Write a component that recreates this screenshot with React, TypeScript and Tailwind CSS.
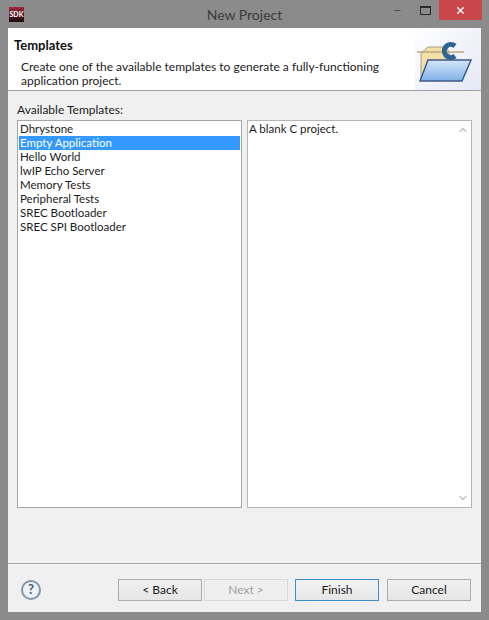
import React from "react";
import { ChevronDown, ChevronUp, Minus, X } from "lucide-react";

const templates = [
  "Dhrystone",
  "Empty Application",
  "Hello World",
  "lwIP Echo Server",
  "Memory Tests",
  "Peripheral Tests",
  "SREC Bootloader",
  "SREC SPI Bootloader",
];

const FolderIcon = () => (
  <svg width="60" height="46" viewBox="0 0 60 46">
    <defs>
      <linearGradient id="folderFront" x1="0" y1="0" x2="0" y2="1">
        <stop offset="0" stopColor="#d6e6f8" />
        <stop offset="1" stopColor="#7fb0e8" />
      </linearGradient>
    </defs>
    <path d="M4 44 L4 17 L11 11 L30 11 L34 24 L34 40 Z" fill="#f3dfa8" stroke="#a8a08a" strokeWidth="1" />
    <path d="M0 16 L47 16" stroke="#b9a77f" strokeWidth="1.5" />
    <path d="M38 10 A6.5 6.5 0 1 0 38 20" fill="none" stroke="#2f6393" strokeWidth="5" />
    <path d="M3 45 L11 24 L54 24 L45 45 Z" fill="url(#folderFront)" stroke="#3f5a86" strokeWidth="1.5" />
  </svg>
);

const WizardButton = ({
  label,
  disabled,
  primary,
}: {
  label: string;
  disabled?: boolean;
  primary?: boolean;
}) => (
  <button
    type="button"
    className={`h-[22px] w-[84px] border bg-gradient-to-b text-[12px] leading-none ${
      disabled
        ? "border-[#d9d9d9] from-[#efefef] to-[#efefef] text-[#a0a0a0]"
        : primary
        ? "border-[#3c8fc8] from-[#f2f2f2] to-[#e6e6e6] text-[#1a1a1a]"
        : "border-[#acacac] from-[#f0f0f0] to-[#e5e5e5] text-[#1a1a1a]"
    }`}
  >
    {label}
  </button>
);

export default function App() {
  return (
    <div className="flex h-[620px] w-[489px] flex-col bg-[#8b8b8b] px-2 pb-2 font-['Lato',sans-serif] text-[11.5px] text-[#1c1c1c]">
      <div className="relative flex h-[28px] shrink-0 items-center justify-center">
        <div className="absolute left-[1px] top-[7px] flex h-[15px] w-[15px] items-center justify-center bg-gradient-to-b from-[#a02838] to-[#1c0a10] text-[7px] font-bold leading-none text-white">
          SDK
        </div>
        <span className="text-[14px] text-[#3c3c3c]">New Project</span>
        <div className="absolute -right-[1px] top-0 flex items-start">
          <div className="flex h-[20px] w-[29px] items-center justify-center text-[#3a3a3a]">
            <Minus size={9} strokeWidth={2} />
          </div>
          <div className="flex h-[20px] w-[27px] items-center justify-center">
            <div className="h-[9px] w-[11px] border border-t-2 border-[#2b2b2b]" />
          </div>
          <div className="flex h-[20px] w-[43px] items-center justify-center bg-[#c9474a] text-white">
            <X size={11} strokeWidth={3} />
          </div>
        </div>
      </div>

      <div className="flex min-h-0 flex-1 flex-col bg-[#f0f0f0]">
        <div className="flex h-[63px] shrink-0 justify-between border-b border-[#a0a0a0] bg-white">
          <div className="pl-[6px] pt-[9px]">
            <div className="text-[13px] font-bold leading-[17px] text-[#111]">Templates</div>
            <div className="mt-[6px] whitespace-nowrap pl-[7px] text-[12px] leading-[14px]">
              Create one of the available templates to generate a fully-functioning
              <br />
              application project.
            </div>
          </div>
          <div className="flex w-[66px] items-center justify-center bg-gradient-to-br from-white to-[#e4e8f4] pr-[2px]">
            <FolderIcon />
          </div>
        </div>

        <div className="flex min-h-0 flex-1 flex-col px-[9px] pt-[10px]">
          <div className="text-[12px] leading-[17px]">Available Templates:</div>
          <div className="mt-[2px] flex h-[388px] gap-[5px]">
            <div className="w-[225px] border border-[#a6a6a6] bg-white p-px">
              {templates.map((name) => (
                <div
                  key={name}
                  className={`h-[14px] pl-[1px] leading-[14px] ${
                    name === "Empty Application" ? "bg-[#3399ff] text-white" : ""
                  }`}
                >
                  {name}
                </div>
              ))}
            </div>
            <div className="flex w-[225px] justify-between border border-[#b5b5b5] bg-white">
              <div className="pl-[1px] pt-px leading-[14px]">A blank C project.</div>
              <div className="flex w-[17px] flex-col items-center justify-between py-[3px] text-[#c4c4c4]">
                <ChevronUp size={12} strokeWidth={3} />
                <ChevronDown size={12} strokeWidth={3} />
              </div>
            </div>
          </div>
        </div>

        <div className="flex h-[49px] shrink-0 items-center border-t border-[#a8a8a8] pl-[13px] pr-[10px] pt-[3px]">
          <div className="flex h-[20px] w-[20px] items-center justify-center rounded-full border-2 border-[#8296ac] bg-[#eef1f5] text-[13px] font-bold leading-none text-[#4a5a70]">
            ?
          </div>
          <div className="ml-auto flex">
            <WizardButton label="< Back" />
            <div className="ml-[2px]">
              <WizardButton label="Next >" disabled />
            </div>
            <div className="ml-[7px]">
              <WizardButton label="Finish" primary />
            </div>
            <div className="ml-[8px]">
              <WizardButton label="Cancel" />
            </div>
          </div>
        </div>
      </div>
    </div>
  );
}
